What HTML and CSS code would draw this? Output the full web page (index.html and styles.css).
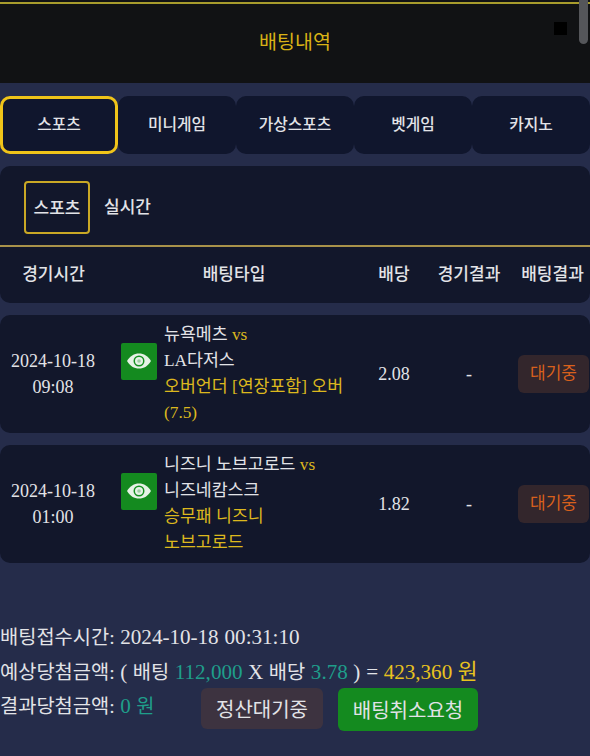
FILE: index.html
```html
<!DOCTYPE html>
<html lang="ko">

<head>
    <meta charset="UTF-8">
    <meta name="viewport" content="width=device-width, initial-scale=1.0">
    <title>배팅내역</title>
    <link rel="stylesheet" href="styles.css">
</head>

<body>
    <header class="top-bar">
        <h1>배팅내역</h1>
        <span class="square"></span>
        <span class="scroll-thumb"></span>
    </header>

    <nav class="tabs">
        <a class="tab active">스포츠</a>
        <a class="tab">미니게임</a>
        <a class="tab">가상스포츠</a>
        <a class="tab">벳게임</a>
        <a class="tab">카지노</a>
    </nav>

    <section class="panel">
        <div class="sub-tabs">
            <a class="sub-tab active">스포츠</a>
            <a class="sub-tab">실시간</a>
        </div>
        <div class="cols head">
            <div>경기시간</div>
            <div>배팅타입</div>
            <div>배당</div>
            <div>경기결과</div>
            <div>배팅결과</div>
        </div>
    </section>

    <section class="cols row">
        <div class="time">2024-10-18<br>09:08</div>
        <div class="info">
            <button class="eye" type="button">
                <svg viewBox="0 0 26 18" width="26" height="18">
                    <path d="M1 9C4 4 8 1.500 13 1.500S22 4 25 9c-3 5-7 7.500-12 7.500S4 14 1 9z" fill="#e6f2e6" />
                    <circle cx="13" cy="9" r="5.500" fill="#159020" />
                    <circle cx="13" cy="9" r="4" fill="#e6f2e6" />
                    <circle cx="13" cy="9" r="1.800" fill="#9fcfa3" />
                </svg>
            </button>
            <div class="match">
                <div>뉴욕메츠 <span class="vs">vs</span></div>
                <div>LA다저스</div>
                <div class="pick">오버언더 [연장포함] 오버 (7.5)</div>
            </div>
        </div>
        <div>2.08</div>
        <div>-</div>
        <div><span class="status">대기중</span></div>
    </section>

    <section class="cols row">
        <div class="time">2024-10-18<br>01:00</div>
        <div class="info">
            <button class="eye" type="button">
                <svg viewBox="0 0 26 18" width="26" height="18">
                    <path d="M1 9C4 4 8 1.500 13 1.500S22 4 25 9c-3 5-7 7.500-12 7.500S4 14 1 9z" fill="#e6f2e6" />
                    <circle cx="13" cy="9" r="5.500" fill="#159020" />
                    <circle cx="13" cy="9" r="4" fill="#e6f2e6" />
                    <circle cx="13" cy="9" r="1.800" fill="#9fcfa3" />
                </svg>
            </button>
            <div class="match">
                <div>니즈니 노브고로드 <span class="vs">vs</span></div>
                <div>니즈네캄스크</div>
                <div class="pick">승무패 니즈니<br>노브고로드</div>
            </div>
        </div>
        <div>1.82</div>
        <div>-</div>
        <div><span class="status">대기중</span></div>
    </section>

    <footer class="summary">
        <div class="line">배팅접수시간: <span class="num">2024-10-18 00:31:10</span></div>
        <div class="line">예상당첨금액: <span class="num">(</span> 배팅 <span class="num teal">112,000</span> <span class="num">X</span> 배당 <span class="num teal">3.78</span> <span class="num">) =</span> <span class="gold"><span class="num">423,360</span> <span class="won">원</span></span></div>
        <div class="line last">
            <span class="result">결과당첨금액: <span class="teal"><span class="num">0</span> 원</span></span>
            <button class="btn wait" type="button">정산대기중</button>
            <button class="btn cancel" type="button">배팅취소요청</button>
        </div>
    </footer>
</body>

</html>
```

FILE: styles.css
```css
* {
    box-sizing: border-box;
}

html,
body {
    height: 756px;
    overflow: hidden;
}

body {
    margin: 0;
    background-color: #252c4a;
    color: #e2e3e7;
    font-family: 'Liberation Serif', 'Noto Sans CJK KR', serif;
    font-size: 18px;
}

.top-bar {
    position: relative;
    height: 83px;
    padding-bottom: 2px;
    background-color: #111214;
    display: flex;
    align-items: center;
    justify-content: center;
}

.top-bar::before {
    content: '';
    position: absolute;
    top: 2px;
    left: 0;
    right: 0;
    height: 2px;
    background-color: #a89c2c;
}

.top-bar h1 {
    margin: 0;
    color: #d9b216;
    font-size: 19.500px;
    font-weight: 400;
}

.square {
    position: absolute;
    top: 22px;
    left: 554px;
    width: 13px;
    height: 13px;
    background-color: #000;
}

.scroll-thumb {
    position: absolute;
    top: 0;
    left: 579px;
    width: 9px;
    height: 44px;
    border-radius: 0 0 5px 5px;
    background-color: #55565a;
}

.tabs {
    display: flex;
    padding: 13px 0 0;
}

.tab {
    flex: 0 0 118px;
    height: 58px;
    padding-bottom: 4px;
    display: flex;
    align-items: center;
    justify-content: center;
    background-color: #10162d;
    border-radius: 10px;
    font-family: 'Noto Sans CJK KR', sans-serif;
    font-size: 15.800px;
    font-weight: 500;
}

.tab.active {
    border: 3px solid #f0c419;
}

.panel {
    margin-top: 12px;
    height: 137px;
    background-color: #12172b;
    border-radius: 10px;
}

.sub-tabs {
    height: 81px;
    padding: 15px 0 12px 24px;
    display: flex;
    align-items: stretch;
    gap: 14px;
    border-bottom: 2px solid #a8924a;
}

.sub-tab {
    padding-bottom: 3px;
    display: flex;
    align-items: center;
    justify-content: center;
    font-family: 'Noto Sans CJK KR', sans-serif;
    font-size: 17px;
    font-weight: 500;
}

.sub-tab.active {
    width: 66px;
    height: 53px;
    border: 2px solid #c9a825;
    border-radius: 4px;
}

.cols {
    display: grid;
    grid-template-columns: 107px 254px 66px 84px 79px;
    align-items: center;
    text-align: center;
}

.head {
    height: 54px;
    padding-bottom: 3px;
    font-family: 'Noto Sans CJK KR', sans-serif;
    font-size: 17px;
    font-weight: 500;
}

.head div:last-child {
    padding-left: 4px;
}

.row {
    margin-top: 12px;
    height: 118px;
    background-color: #12172b;
    border-radius: 10px;
}

.time {
    padding-right: 1px;
    line-height: 26px;
}

.info {
    display: flex;
    align-items: center;
    gap: 7px;
    padding-left: 14px;
    text-align: left;
}

.eye {
    flex: none;
    width: 36px;
    height: 37px;
    margin-bottom: 26px;
    padding: 0;
    border: 0;
    border-radius: 2px;
    background-color: #148a1f;
    display: flex;
    align-items: center;
    justify-content: center;
}

.match {
    width: 186px;
    line-height: 26px;
    font-size: 17.300px;
}

.vs,
.pick {
    color: #dcb81e;
}

.status {
    display: inline-block;
    width: 71px;
    margin-left: 6px;
    height: 38px;
    line-height: 38px;
    background-color: #33262c;
    border-radius: 6px;
    color: #d9601c;
    font-size: 17px;
}

.summary {
    margin-top: 57px;
    font-size: 19.800px;
}

.line {
    height: 34.500px;
    line-height: 34.500px;
    white-space: nowrap;
    word-spacing: 0.600px;
}

.num {
    font-size: 21.100px;
}

.won {
    font-size: 21.500px;
}

.teal {
    color: #1f9e8a;
}

.gold {
    color: #e8c21e;
}

.last {
    display: flex;
    align-items: flex-start;
}

.result {
    width: 201px;
}

.btn {
    height: 41px;
    margin-top: -1px;
    padding: 0;
    border: 0;
    border-radius: 6px;
    color: #e2e3e7;
    font-family: 'Noto Sans CJK KR', sans-serif;
    font-size: 20px;
}

.wait {
    width: 122px;
    margin-right: 15px;
    background-color: #3d3340;
}

.cancel {
    width: 140px;
    height: 43px;
    background-color: #148a1f;
}
```
